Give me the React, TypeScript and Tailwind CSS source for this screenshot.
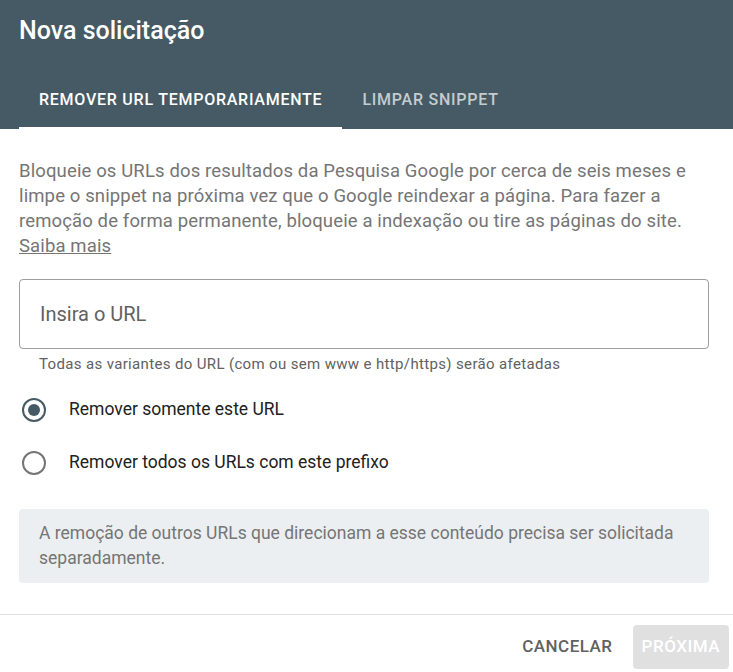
import React, { useState } from 'react';

const tabs = ['Remover URL temporariamente', 'Limpar snippet'];

export default function App() {
    const [activeTab, setActiveTab] = useState(0);
    const [mode, setMode] = useState<'url' | 'prefix'>('url');

    const options = [
        { id: 'url' as const, label: 'Remover somente este URL' },
        { id: 'prefix' as const, label: 'Remover todos os URLs com este prefixo' },
    ];

    return (
        <div className="w-[733px] h-[672px] bg-white flex flex-col overflow-hidden" style={{ fontFamily: 'Roboto, "Noto Sans", sans-serif' }}>
            <div className="bg-[#455a64] h-[129px] flex flex-col shrink-0">
                <h2 className="text-white text-[25px] font-medium leading-none px-[19px] pt-[18px]">Nova solicitação</h2>
                <div className="flex mt-auto px-[19px]">
                    {tabs.map((t, i) => (
                        <button
                            key={t}
                            onClick={() => setActiveTab(i)}
                            className={`px-5 h-[60px] pt-[3px] text-[16px] font-medium uppercase tracking-[0.75px] border-b-2 ${
                                i === activeTab ? 'text-white border-white' : 'text-[#c4ccd0] border-transparent'
                            }`}
                        >
                            {t}
                        </button>
                    ))}
                </div>
            </div>

            <div className="pl-[19px] pr-[24px] pt-[30px] flex flex-col flex-1">
                <p className="text-[18.5px] leading-[25px] tracking-[0.13px] text-[#757575]">
                    Bloqueie os URLs dos resultados da Pesquisa Google por cerca de seis meses e limpe o snippet na próxima vez que o Google reindexar a página. Para fazer a remoção de forma permanente, bloqueie a indexação ou tire as páginas do site.{' '}
                    <a href="#" className="underline text-[#757575]">Saiba mais</a>
                </p>

                <div className="mt-[20px] h-[70px] border border-[#9e9e9e] rounded-[4px] flex items-center px-[20px]">
                    <input
                        placeholder="Insira o URL"
                        className="w-full outline-none text-[20px] text-[#212121] placeholder:text-[#616161] bg-transparent"
                    />
                </div>
                <p className="text-[15px] tracking-[0.35px] text-[#616161] mt-[6px] pl-[20px] leading-[18px]">
                    Todas as variantes do URL (com ou sem www e http/https) serão afetadas
                </p>

                <div className="flex flex-col mt-[10px]">
                    {options.map((o) => (
                        <label key={o.id} className="flex items-center h-[53px] pl-[3px] cursor-pointer">
                            <span
                                className={`w-[24px] h-[24px] rounded-full border-2 flex items-center justify-center shrink-0 ${
                                    mode === o.id ? 'border-[#455a64]' : 'border-[#757575]'
                                }`}
                            >
                                {mode === o.id && <span className="w-[12px] h-[12px] rounded-full bg-[#455a64]" />}
                            </span>
                            <input type="radio" className="hidden" checked={mode === o.id} onChange={() => setMode(o.id)} />
                            <span className="ml-[23px] text-[17.5px] text-[#212121]">{o.label}</span>
                        </label>
                    ))}
                </div>

                <div className="mt-[20px] bg-[#eceff1] rounded-[4px] px-[20px] py-[12px] text-[17.5px] leading-[25px] text-[#757575]">
                    A remoção de outros URLs que direcionam a esse conteúdo precisa ser solicitada separadamente.
                </div>
            </div>

            <div className="border-t border-[#e0e0e0] h-[58px] flex items-start justify-end gap-[20px] pt-[10px] pr-[4px] shrink-0">
                <button className="h-[44px] text-[17px] tracking-[0.5px] font-medium uppercase text-[#616161]">Cancelar</button>
                <button disabled className="h-[44px] px-[9px] rounded-[4px] bg-[#e0e0e0] text-[17px] tracking-[0.5px] font-medium uppercase text-white">
                    Próxima
                </button>
            </div>
        </div>
    );
}
